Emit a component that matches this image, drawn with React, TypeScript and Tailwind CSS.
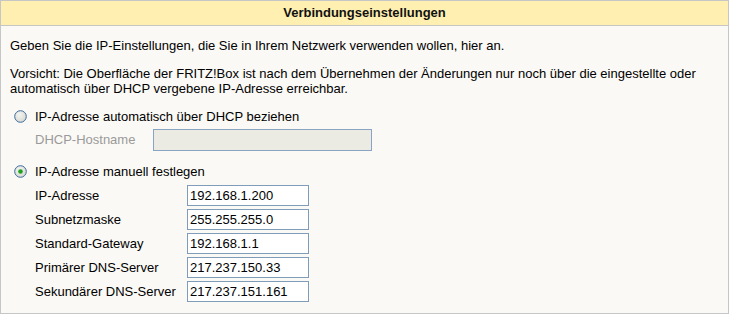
import React from "react";

const font = { fontFamily: '"Liberation Sans", Arial, sans-serif' };

function Radio({ checked }: { checked?: boolean }) {
  return (
    <svg width="13" height="13" viewBox="0 0 13 13" className="shrink-0">
      <defs>
        <radialGradient id={checked ? "rg1" : "rg0"} cx="0.4" cy="0.35" r="0.7">
          <stop offset="0" stopColor="#f4f4f0" />
          <stop offset="1" stopColor="#d8d8d2" />
        </radialGradient>
      </defs>
      <circle cx="6.5" cy="6.5" r="5.8" fill={`url(#${checked ? "rg1" : "rg0"})`} stroke="#3c6a9c" strokeWidth="1" />
      {checked && <circle cx="6.5" cy="6.5" r="2.3" fill="#21a121" />}
    </svg>
  );
}

const rows = [
  { label: "IP-Adresse", value: "192.168.1.200" },
  { label: "Subnetzmaske", value: "255.255.255.0" },
  { label: "Standard-Gateway", value: "192.168.1.1" },
  { label: "Primärer DNS-Server", value: "217.237.150.33" },
  { label: "Sekundärer DNS-Server", value: "217.237.151.161" },
];

export default function App() {
  return (
    <div style={font} className="w-[730px] h-[315px] bg-white text-[13px] text-black">
      <div className="w-[729px] h-[314px] border border-[#c6c6c6] bg-[#faf9f5]">
        {/* Header */}
        <div className="h-[25px] bg-[#ffefb0] border-b border-[#c6c6c6] flex items-center justify-center font-bold text-[13px] text-[#111]">
          Verbindungseinstellungen
        </div>

        <div className="pl-[9px] pr-[6px]">
          <p className="mt-[12px] leading-[15px]">
            Geben Sie die IP-Einstellungen, die Sie in Ihrem Netzwerk verwenden wollen, hier an.
          </p>
          <p className="mt-[13px] leading-[15px]">
            Vorsicht: Die Oberfläche der FRITZ!Box ist nach dem Übernehmen der Änderungen nur noch über die eingestellte oder
            <br />
            automatisch über DHCP vergebene IP-Adresse erreichbar.
          </p>

          {/* DHCP */}
          <div className="mt-[13px] flex items-center h-[15px] pl-[4px] gap-[8px] leading-[15px]">
            <Radio />
            <span>IP-Adresse automatisch über DHCP beziehen</span>
          </div>
          <div className="mt-[5px] flex items-center pl-[25px]">
            <span className="w-[118px] text-[#9a9a9a]">DHCP-Hostname</span>
            <div className="w-[219px] h-[22px] border border-[#8aa4c4] bg-[#ebebe4]" />
          </div>

          {/* Manual */}
          <div className="mt-[13px] flex items-center h-[15px] pl-[4px] gap-[8px] leading-[15px]">
            <Radio checked />
            <span>IP-Adresse manuell festlegen</span>
          </div>
          <div className="mt-[6px] flex flex-col gap-[3px] pl-[25px]">
            {rows.map((r) => (
              <div key={r.label} className="flex items-center h-[21px]">
                <span className="w-[152px] leading-[15px]">{r.label}</span>
                <div className="w-[122px] h-[21px] border border-[#7f9db9] bg-white flex items-center pl-[2px] text-black leading-[15px]">
                  {r.value}
                </div>
              </div>
            ))}
          </div>
        </div>
      </div>
    </div>
  );
}
